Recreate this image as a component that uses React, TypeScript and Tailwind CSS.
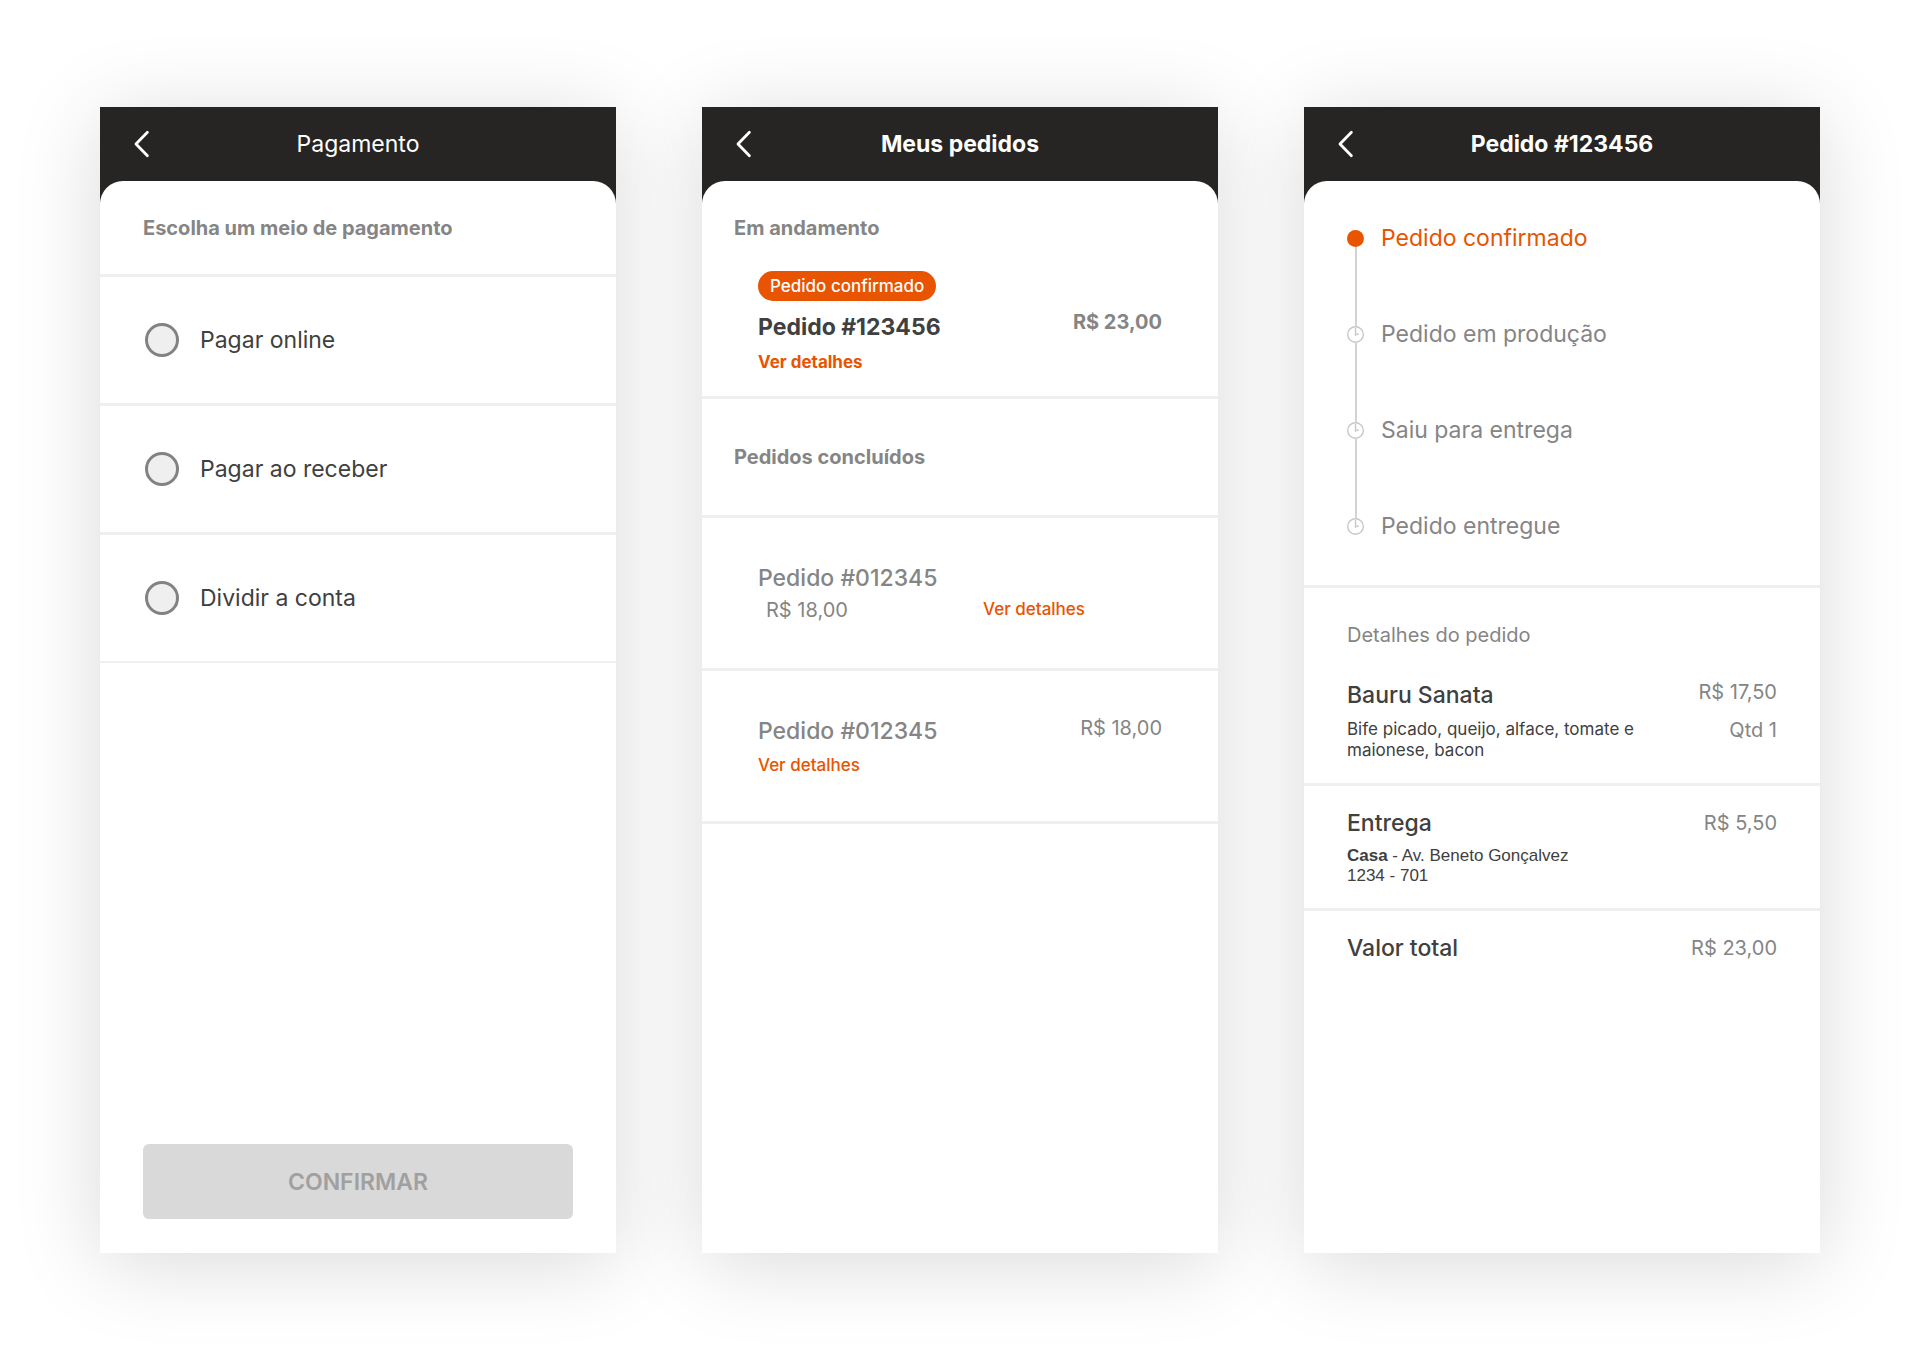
import { useState } from 'react';
import type { ReactNode } from 'react';

interface PaymentOption {
  id: string;
  label: string;
}

interface Step {
  id: number;
  label: string;
  done: boolean;
}

const paymentOptions: PaymentOption[] = [
  { id: 'online', label: 'Pagar online' },
  { id: 'receber', label: 'Pagar ao receber' },
  { id: 'dividir', label: 'Dividir a conta' },
];

const steps: Step[] = [
  { id: 1, label: 'Pedido confirmado', done: true },
  { id: 2, label: 'Pedido em produção', done: false },
  { id: 3, label: 'Saiu para entrega', done: false },
  { id: 4, label: 'Pedido entregue', done: false },
];

const ClockIcon = () => (
  <svg className="size-[17px] shrink-0" viewBox="0 0 17 17" fill="none" stroke="#c8c8c8" aria-hidden="true">
    <circle cx="8.5" cy="8.5" r="7.8" strokeWidth="1.4" />
    <path d="M8.5 2V8.9L11.8 7.6" strokeWidth="1.4" />
  </svg>
);

// Phone frame: dark header with the white sheet below it
const Screen = ({ title, bold = false, children }: { title: string; bold?: boolean; children: ReactNode }) => (
  <section className="flex flex-col bg-[#262524] shadow-[0_10px_80px_rgba(0,0,0,0.15)]">
    <header className="grid h-[74px] grid-cols-[1fr_auto_1fr] items-center px-[34px] text-white">
      <button type="button" aria-label="Voltar" className="justify-self-start">
        <svg className="h-[28px] w-[16px]" viewBox="0 0 16 28" fill="none" stroke="currentColor" aria-hidden="true">
          <path d="M13.4 2.2L2 14L13.4 25.8" strokeWidth="2.8" strokeLinecap="round" strokeLinejoin="round" />
        </svg>
      </button>
      <h1 className={`text-[23px] leading-[30px] ${bold ? 'font-bold' : 'font-normal'}`}>{title}</h1>
    </header>
    <div className="flex flex-1 flex-col rounded-t-[23px] bg-white">{children}</div>
  </section>
);

const PaymentScreen = () => {
  const [selected, setSelected] = useState('');

  return (
    <Screen title="Pagamento">
      <form className="flex flex-1 flex-col" onSubmit={(e) => e.preventDefault()}>
        <fieldset>
          <legend className="w-full border-b-[3px] border-[#efefef] px-[43px] pt-[35px] pb-[34px] text-[20px] leading-[24px] font-bold text-[#858585]">
            Escolha um meio de pagamento
          </legend>
          {paymentOptions.map((option) => (
            <label
              key={option.id}
              className="flex items-center gap-[21px] border-b-[3px] border-[#efefef] px-[45px] py-[46px] text-[23px] leading-[34px] text-[#404040] last:border-b-2"
            >
              <input
                type="radio"
                name="pagamento"
                value={option.id}
                checked={selected === option.id}
                onChange={() => setSelected(option.id)}
                className="size-[34px] shrink-0 appearance-none rounded-full border-[3px] border-[#828282] bg-[#efefef] checked:bg-[#e85400]"
              />
              {option.label}
            </label>
          ))}
        </fieldset>
        <button
          type="submit"
          disabled={!selected}
          className="mx-[43px] mt-auto mb-[34px] h-[75px] rounded-[6px] bg-[#e85400] text-[23px] leading-[30px] font-semibold text-white disabled:bg-[#d9d9d9] disabled:text-[#a0a0a0]"
        >
          CONFIRMAR
        </button>
      </form>
    </Screen>
  );
};

const OrdersScreen = () => (
  <Screen title="Meus pedidos" bold>
    <div className="border-b-[3px] border-[#efefef] pt-[35px] pb-[23px]">
      <h2 className="px-[32px] text-[20px] leading-[24px] font-bold text-[#858585]">Em andamento</h2>
      <div className="mt-[31px] flex items-center justify-between px-[56px]">
        <div className="flex flex-col items-start">
          <span className="rounded-full bg-[#e85400] px-[12px] text-[17px] leading-[30px] font-medium text-white">
            Pedido confirmado
          </span>
          <h3 className="mt-[11px] text-[23px] leading-[30px] font-bold text-[#404040]">Pedido #123456</h3>
          <a href="#123456" className="mt-[9px] text-[17px] leading-[22px] font-bold text-[#e85400]">
            Ver detalhes
          </a>
        </div>
        <p className="text-[20px] leading-[24px] font-bold text-[#858585]">R$ 23,00</p>
      </div>
    </div>

    <h2 className="border-b-[3px] border-[#efefef] px-[32px] py-[46px] text-[20px] leading-[24px] font-bold text-[#858585]">
      Pedidos concluídos
    </h2>

    <div className="border-b-[3px] border-[#efefef] px-[56px] pt-[45px] pb-[46px]">
      <h3 className="text-[23px] leading-[30px] font-medium text-[#858585]">Pedido #012345</h3>
      <div className="mt-[5px] flex items-start justify-between pr-[77px] pl-[8px]">
        <p className="text-[20px] leading-[24px] text-[#858585]">R$ 18,00</p>
        <a href="#012345" className="text-[17px] leading-[22px] font-medium text-[#e85400]">
          Ver detalhes
        </a>
      </div>
    </div>

    <div className="flex items-start justify-between border-b-[3px] border-[#efefef] px-[56px] py-[45px]">
      <div className="flex flex-col items-start">
        <h3 className="text-[23px] leading-[30px] font-medium text-[#858585]">Pedido #012345</h3>
        <a href="#012345" className="mt-[8px] text-[17px] leading-[22px] font-medium text-[#e85400]">
          Ver detalhes
        </a>
      </div>
      <p className="text-[20px] leading-[24px] text-[#858585]">R$ 18,00</p>
    </div>
  </Screen>
);

const OrderDetailScreen = () => (
  <Screen title="Pedido #123456" bold>
    <ol className="border-b-[3px] border-[#efefef] px-[43px] pt-[49px] pb-[50px]">
      {steps.map((step, index) => (
        <li key={step.id} className="flex gap-[17px]">
          <div className="flex flex-col items-center">
            {step.done ? <span className="size-[17px] rounded-full bg-[#e85400]" /> : <ClockIcon />}
            {index < steps.length - 1 && <span className="h-[79px] w-[2px] bg-[#d2d2d2]" />}
          </div>
          <p className={`text-[23px] leading-[17px] ${step.done ? 'text-[#e85400]' : 'text-[#858585]'}`}>
            {step.label}
          </p>
        </li>
      ))}
    </ol>

    <div className="border-b-[3px] border-[#efefef] px-[43px] pt-[35px] pb-[22px]">
      <h2 className="text-[20px] leading-[24px] text-[#858585]">Detalhes do pedido</h2>
      <div className="mt-[33px] flex items-start justify-between">
        <div>
          <h3 className="text-[23px] leading-[30px] font-medium text-[#404040]">Bauru Sanata</h3>
          <p className="mt-[9px] w-[300px] text-[17px] leading-[21px] text-[#404040]">
            Bife picado, queijo, alface, tomate e maionese, bacon
          </p>
        </div>
        <div className="text-right text-[20px] leading-[24px] text-[#858585]">
          <p>R$ 17,50</p>
          <p className="mt-[14px]">Qtd 1</p>
        </div>
      </div>
    </div>

    <div className="border-b-[3px] border-[#efefef] px-[43px] py-[22px]">
      <div className="flex items-center justify-between">
        <h3 className="text-[23px] leading-[30px] font-medium text-[#404040]">Entrega</h3>
        <p className="text-[20px] leading-[24px] text-[#858585]">R$ 5,50</p>
      </div>
      <p className="mt-[8px] font-['Liberation_Sans',Arial,sans-serif] text-[17px] leading-[20px] text-[#404040]">
        <strong>Casa</strong> - Av. Beneto Gonçalvez
        <br />
        1234 - 701
      </p>
    </div>

    <div className="flex items-center justify-between px-[43px] pt-[22px]">
      <h3 className="text-[23px] leading-[30px] font-medium text-[#404040]">Valor total</h3>
      <p className="text-[20px] leading-[24px] text-[#858585]">R$ 23,00</p>
    </div>
  </Screen>
);

export default function App() {
  return (
    <main className="grid min-h-screen grid-cols-3 gap-[86px] bg-white px-[100px] py-[107px] font-[Inter,sans-serif]">
      <PaymentScreen />
      <OrdersScreen />
      <OrderDetailScreen />
    </main>
  );
}
